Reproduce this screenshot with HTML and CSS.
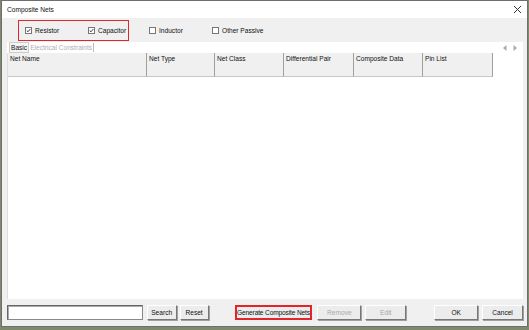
FILE: index.html
```html
<!DOCTYPE html>
<html>
<head>
<meta charset="utf-8">
<link rel="stylesheet" href="styles.css">
</head>
<body>
<div class="desk">
  <div class="win">
    <div class="titlebar">
      <span class="title">Composite Nets</span>
      <svg class="close" width="9" height="9" viewBox="0 0 9 9"><path d="M1 1L8 8M8 1L1 8" stroke="#333" stroke-width="1"/></svg>
    </div>
    <div class="body">
      <div class="checks">
        <div class="hl">
          <label class="chk c1"><span class="box on"><svg width="7" height="7" viewBox="0 0 7 7"><path d="M1 3.5L2.8 5.3L6 1.5" stroke="#222" stroke-width="1.2" fill="none"/></svg></span>Resistor</label>
          <label class="chk c2"><span class="box on"><svg width="7" height="7" viewBox="0 0 7 7"><path d="M1 3.5L2.8 5.3L6 1.5" stroke="#222" stroke-width="1.2" fill="none"/></svg></span>Capacitor</label>
        </div>
        <label class="chk c3"><span class="box"></span>Inductor</label>
        <label class="chk c4"><span class="box"></span>Other Passive</label>
      </div>
      <div class="panel">
        <div class="tabs">
          <span class="tab active">Basic</span><span class="tab dim">Electrical Constraints</span>
          <span class="arrows"><svg width="4" height="6" viewBox="0 0 4 6"><path d="M3.5 0L0 3L3.5 6Z" fill="#aaa"/></svg><svg width="4" height="6" viewBox="0 0 4 6"><path d="M0.5 0L4 3L0.5 6Z" fill="#aaa"/></svg></span>
        </div>
        <div class="grid">
          <div class="head">
            <div class="col w1">Net Name</div>
            <div class="col w2">Net Type</div>
            <div class="col w3">Net Class</div>
            <div class="col w4">Differential Pair</div>
            <div class="col w5">Composite Data</div>
            <div class="col w6">Pin List</div>
          </div>
          <div class="rows"></div>
        </div>
      </div>
      <div class="footer">
        <div class="input"></div>
        <button class="btn b-search">Search</button>
        <button class="btn b-reset">Reset</button>
        <button class="btn b-gen">Generate Composite Nets</button>
        <button class="btn b-remove dis">Remove</button>
        <button class="btn b-edit dis">Edit</button>
        <button class="btn b-ok">OK</button>
        <button class="btn b-cancel">Cancel</button>
      </div>
    </div>
  </div>
</div>
</body>
</html>
```

FILE: styles.css
```css
* { box-sizing: border-box; }
html, body { margin: 0; padding: 0; }
body {
  width: 529px; height: 330px; overflow: hidden;
  background: #7d8a6c;
  font-family: "Liberation Sans", Arial, sans-serif;
  font-size: 6.6px;
  color: #111;
}
.desk { padding: 0 0 3px 1px; height: 330px; }
.win {
  width: 527px; height: 327px;
  border: 1px solid #6e6e6e;
  background: #f0f0f0;
  display: flex; flex-direction: column;
}
.titlebar {
  height: 17px; background: #fff;
  display: flex; align-items: center; justify-content: space-between;
  padding: 0 5px 0 5px;
}
.title { font-size: 6.6px; color: #111; }
.body { flex: 1; display: flex; flex-direction: column; padding: 0 4px 4px 5px; }
.checks { height: 23px; display: flex; align-items: center; padding-left: 11px; padding-top: 2px; }
.hl {
  display: flex; align-items: center;
  width: 111px; height: 21px;
  border: 1.5px solid #e0262a;
  padding-left: 6px;
}
.chk { display: flex; align-items: center; white-space: nowrap; }
.box {
  width: 7px; height: 7px; border: 1px solid #777; background: #fff;
  margin-right: 3px; display: inline-flex; align-items: center; justify-content: center;
}
.box svg { display: block; }
.c1 { width: 63px; }
.c3 { margin-left: 20px; width: 63px; }
.panel { flex: 1; display: flex; flex-direction: column; }
.tabs {
  height: 11px; background: #fff; display: flex; align-items: center; padding-left: 2px;
  margin-top: 1px;
}
.tab { padding: 0 1px; border-right: 1px solid #bbb; line-height: 9px; white-space: nowrap; }
.tab.active { border: 1px solid #ccc; background: #f4f4f4; }
.tab.dim { color: #b0b0b0; }
.arrows { margin-left: auto; display: flex; gap: 6px; padding-right: 6px; }
.grid { flex: 1; background: #fff; display: flex; flex-direction: column; border-left: 1px solid #ddd; }
.head { display: flex; height: 24px; }
.col {
  background: #f0f0f0; border-right: 1px solid #a0a0a0; border-bottom: 1px solid #c8c8c8;
  padding: 2px 2px; white-space: nowrap;
}
.w1 { width: 139px; }
.w2 { width: 68px; }
.w3 { width: 69px; }
.w4 { width: 70px; }
.w5 { width: 69px; }
.w6 { width: 70px; }
.rows { flex: 1; background: #fff; }
.footer { height: 23px; display: flex; align-items: center; padding-top: 4px; }
.input {
  width: 136px; height: 15px; background: #fff;
  border: 1px solid #888; border-top-color: #666; border-left-color: #666;
  box-shadow: inset 1px 1px 0 #aaa;
}
.btn {
  font-family: inherit; font-size: 6.6px; color: #111; white-space: nowrap;
  height: 15px; padding: 0; background: #ececec;
  border: 1px solid #fff; border-right-color: #777; border-bottom-color: #777;
  box-shadow: 1px 1px 0 #a0a0a0;
}
.b-search { width: 30px; margin-left: 4px; }
.b-reset { width: 29px; margin-left: 3px; }
.b-gen {
  width: 78px; margin-left: 26px; letter-spacing: -0.15px;
  border: 2px solid #e0262a; box-shadow: none;
}
.b-remove { width: 44px; margin-left: 5px; }
.b-edit { width: 41px; margin-left: 4px; }
.b-ok { width: 44px; margin-left: 28px; }
.b-cancel { width: 41px; margin-left: 4px; }
.dis { color: #a8a8a8; }
```
